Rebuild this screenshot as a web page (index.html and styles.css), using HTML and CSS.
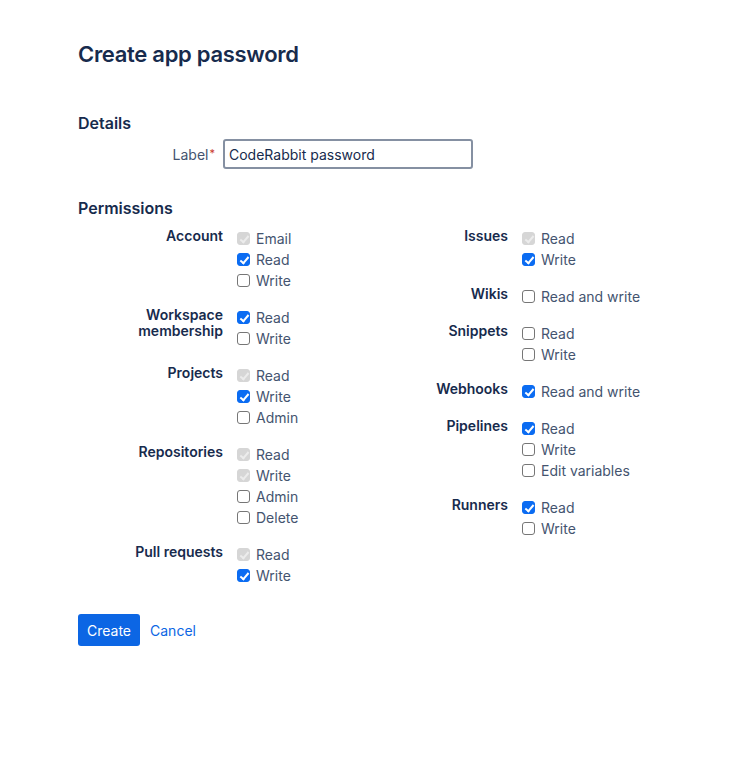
FILE: index.html
```html
<!DOCTYPE html>
<html>
<head>
<meta charset="utf-8">
<link rel="stylesheet" href="styles.css">
</head>
<body>
<main class="page">
  <h1 class="title">Create app password</h1>
  <h2 class="section">Details</h2>
  <div class="field">
    <label class="field-label">Label<span class="req">*</span></label>
    <input class="text-input" type="text" value="CodeRabbit password">
  </div>
  <h2 class="section perms-title">Permissions</h2>
  <div class="perms">
    <div class="col">
      <div class="group">
        <div class="group-label">Account</div>
        <div class="opts">
          <div class="opt"><span class="cb dis"></span>Email</div>
          <div class="opt"><span class="cb on"></span>Read</div>
          <div class="opt"><span class="cb"></span>Write</div>
        </div>
      </div>
      <div class="group">
        <div class="group-label">Workspace membership</div>
        <div class="opts">
          <div class="opt"><span class="cb on"></span>Read</div>
          <div class="opt"><span class="cb"></span>Write</div>
        </div>
      </div>
      <div class="group">
        <div class="group-label">Projects</div>
        <div class="opts">
          <div class="opt"><span class="cb dis"></span>Read</div>
          <div class="opt"><span class="cb on"></span>Write</div>
          <div class="opt"><span class="cb"></span>Admin</div>
        </div>
      </div>
      <div class="group">
        <div class="group-label">Repositories</div>
        <div class="opts">
          <div class="opt"><span class="cb dis"></span>Read</div>
          <div class="opt"><span class="cb dis"></span>Write</div>
          <div class="opt"><span class="cb"></span>Admin</div>
          <div class="opt"><span class="cb"></span>Delete</div>
        </div>
      </div>
      <div class="group">
        <div class="group-label">Pull requests</div>
        <div class="opts">
          <div class="opt"><span class="cb dis"></span>Read</div>
          <div class="opt"><span class="cb on"></span>Write</div>
        </div>
      </div>
    </div>
    <div class="col">
      <div class="group">
        <div class="group-label">Issues</div>
        <div class="opts">
          <div class="opt"><span class="cb dis"></span>Read</div>
          <div class="opt"><span class="cb on"></span>Write</div>
        </div>
      </div>
      <div class="group">
        <div class="group-label">Wikis</div>
        <div class="opts">
          <div class="opt"><span class="cb"></span>Read and write</div>
        </div>
      </div>
      <div class="group">
        <div class="group-label">Snippets</div>
        <div class="opts">
          <div class="opt"><span class="cb"></span>Read</div>
          <div class="opt"><span class="cb"></span>Write</div>
        </div>
      </div>
      <div class="group">
        <div class="group-label">Webhooks</div>
        <div class="opts">
          <div class="opt"><span class="cb on"></span>Read and write</div>
        </div>
      </div>
      <div class="group">
        <div class="group-label">Pipelines</div>
        <div class="opts">
          <div class="opt"><span class="cb on"></span>Read</div>
          <div class="opt"><span class="cb"></span>Write</div>
          <div class="opt"><span class="cb"></span>Edit variables</div>
        </div>
      </div>
      <div class="group">
        <div class="group-label">Runners</div>
        <div class="opts">
          <div class="opt"><span class="cb on"></span>Read</div>
          <div class="opt"><span class="cb"></span>Write</div>
        </div>
      </div>
    </div>
  </div>
  <div class="actions">
    <button class="btn-primary">Create</button>
    <a class="link" href="#">Cancel</a>
  </div>
</main>
</body>
</html>
```

FILE: styles.css
```css
* { box-sizing: border-box; }
html, body { margin: 0; padding: 0; background: #fff; }
body {
  font-family: Inter, "Noto Sans", "Liberation Sans", sans-serif;
  font-size: 14px;
  color: #172b4d;
}
.page {
  padding: 40px 0 0 78px;
}
.title {
  margin: 0;
  font-size: 22px;
  line-height: 28px;
  font-weight: 600;
  color: #172b4d;
  letter-spacing: -0.3px;
}
.section {
  margin: 45px 0 0;
  font-size: 16px;
  line-height: 20px;
  font-weight: 600;
  color: #172b4d;
}
.perms-title { margin-top: 29px; }
.field {
  display: flex;
  align-items: center;
  margin-top: 6px;
}
.field-label {
  width: 145px;
  text-align: right;
  padding-right: 8px;
  color: #44546f;
  font-size: 14px;
}
.req { color: #c9372c; font-size: 11px; vertical-align: top; margin-left: 1px; }
.text-input {
  width: 250px;
  height: 30px;
  border: 2px solid #8590a2;
  border-radius: 3px;
  padding: 0 4px;
  font-family: inherit;
  font-size: 14px;
  color: #172b4d;
  outline: none;
}
.perms {
  display: grid;
  grid-template-columns: 285px 300px;
  margin-top: 10px;
}
.col { display: flex; flex-direction: column; gap: 16px; }
.group { display: flex; }
.group-label {
  width: 145px;
  text-align: right;
  font-weight: 600;
  line-height: 16px;
  color: #172b4d;
  padding-left: 50px;
}
.opts { margin-left: 14px; }
.opt {
  display: flex;
  align-items: center;
  height: 21px;
  color: #44546f;
}
.cb {
  position: relative;
  width: 13px;
  height: 13px;
  border: 1px solid #767676;
  border-radius: 3px;
  background: #fff;
  margin-right: 6px;
  flex: none;
}
.cb.on { background: #0b6cf2; border-color: #0b6cf2; }
.cb.dis { background: #d6d6d6; border-color: #d6d6d6; }
.cb.on::after, .cb.dis::after {
  content: "";
  position: absolute;
  left: 3.5px;
  top: 0.5px;
  width: 3px;
  height: 7px;
  border: solid #fff;
  border-width: 0 2px 2px 0;
  transform: rotate(40deg);
}
.cb.dis::after { border-color: #ececec; }
.actions {
  display: flex;
  align-items: center;
  gap: 10px;
  margin-top: 28px;
}
.btn-primary {
  height: 32px;
  padding: 0 9px;
  background: #0c66e4;
  color: #fff;
  border: none;
  border-radius: 3px;
  font-family: inherit;
  font-size: 14px;
  font-weight: 400;
}
.link {
  color: #0c66e4;
  text-decoration: none;
  font-size: 14px;
}
```
